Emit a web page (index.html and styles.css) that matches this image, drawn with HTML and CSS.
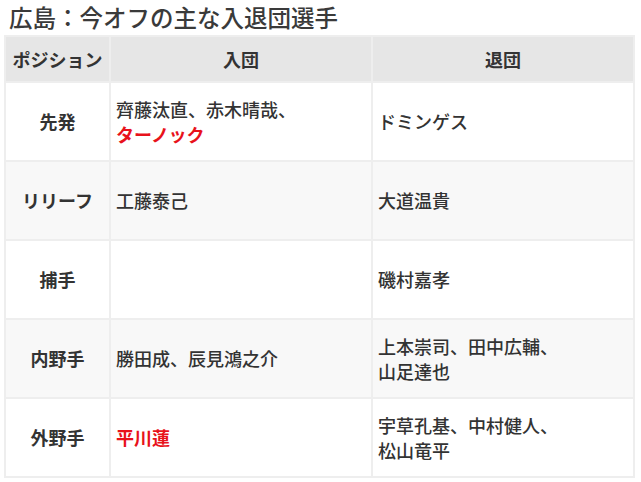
FILE: index.html
```html
<!DOCTYPE html>
<html lang="ja">
<head>
<meta charset="utf-8">
<link rel="stylesheet" href="styles.css">
</head>
<body>
<h1 class="title">広島：今オフの主な入退団選手</h1>
<table class="tbl">
  <colgroup>
    <col class="c-pos">
    <col class="c-in">
    <col class="c-out">
  </colgroup>
  <thead>
    <tr><th>ポジション</th><th>入団</th><th>退団</th></tr>
  </thead>
  <tbody>
    <tr><td class="pos">先発</td><td>齊藤汰直、赤木晴哉、<br><span class="red">ターノック</span></td><td>ドミンゲス</td></tr>
    <tr class="alt"><td class="pos">リリーフ</td><td>工藤泰己</td><td>大道温貴</td></tr>
    <tr><td class="pos">捕手</td><td></td><td>磯村嘉孝</td></tr>
    <tr class="alt"><td class="pos">内野手</td><td>勝田成、辰見鴻之介</td><td>上本崇司、田中広輔、<br>山足達也</td></tr>
    <tr><td class="pos">外野手</td><td><span class="red">平川蓮</span></td><td>宇草孔基、中村健人、<br>松山竜平</td></tr>
  </tbody>
</table>
</body>
</html>
```
FILE: styles.css
```css
html, body {
  margin: 0;
  padding: 0;
  background: #ffffff;
}
body {
  font-family: "Noto Sans CJK JP", "Noto Sans", sans-serif;
  color: #333333;
}
.title {
  margin: 0;
  padding: 0 0 0 9px;
  font-size: 23.5px;
  line-height: 34px;
  font-weight: 500;
  color: #3a3a3a;
  height: 35px;
}
.tbl {
  margin-left: 4px;
  width: 631px;
  border-collapse: collapse;
  table-layout: fixed;
  font-size: 18px;
}
.c-pos { width: 105px; }
.tbl th, .tbl td {
  border: 2px solid #eeeeee;
}
.tbl th {
  background: #e6e6e6;
  height: 44px;
  font-weight: 700;
  text-align: center;
  color: #333;
  padding: 0;
}
.tbl td {
  height: 77px;
  padding: 0 5px;
  line-height: 25px;
  font-weight: 500;
  vertical-align: middle;
  text-align: left;
}
.tbl td.pos {
  text-align: center;
  font-weight: 700;
}
.tbl tr.alt td {
  background: #f8f8f8;
}
.red {
  color: #e8121b;
  font-weight: 700;
}
```
